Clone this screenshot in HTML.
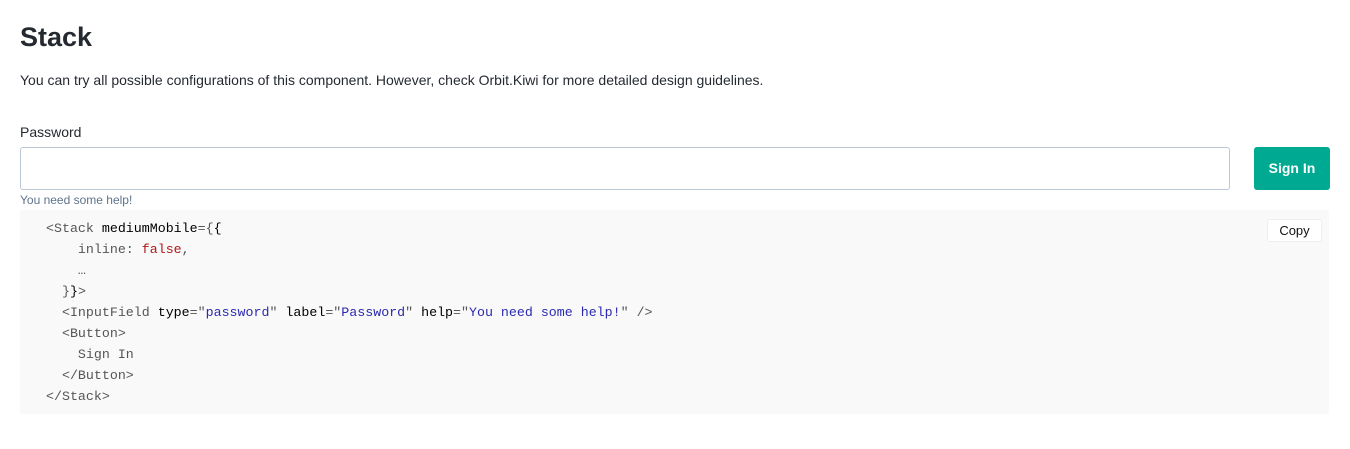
<!DOCTYPE html>
<html><head><style>
body{margin:0;background:#fff;font-family:"Liberation Sans",sans-serif;color:#252a31;width:1350px;height:449px;overflow:hidden;position:relative}
.a{position:absolute}
h1{position:absolute;left:20px;top:22px;margin:0;font-size:27px;font-weight:bold;color:#252a31}
.code{position:absolute;left:20px;top:210px;width:1309px;height:204px;background:#f9f9f9}
pre{margin:0;position:absolute;left:26px;top:8px;font-family:"Liberation Mono",monospace;font-size:13.3px;line-height:21px;color:#555}
.k{color:#000}.s{color:#2a2ab0}.r{color:#b01818}
</style></head><body>
<h1>Stack</h1>
<div class="a" style="left:20px;top:72px;font-size:14px;">You can try all possible configurations of this component. However, check Orbit.Kiwi for more detailed design guidelines.</div>
<div class="a" style="left:20px;top:124px;font-size:14px;">Password</div>
<div class="a" style="left:20px;top:147px;width:1208px;height:41px;border:1px solid #bac7d5;border-radius:3px;"></div>
<div class="a" style="left:1254px;top:147px;width:76px;height:43px;background:#00a991;border-radius:3px;color:#fff;font-weight:bold;font-size:14px;line-height:43px;text-align:center">Sign In</div>
<div class="a" style="left:20px;top:193px;font-size:12px;color:#5f738c">You need some help!</div>
<div class="code">
<pre>&lt;Stack <span class="k">mediumMobile</span>={<span class="k">{</span>
    inline: <span class="r">false</span>,
    …
  }<span class="k">}</span>&gt;
  &lt;InputField <span class="k">type</span>="<span class="s">password</span>" <span class="k">label</span>="<span class="s">Password</span>" <span class="k">help</span>="<span class="s">You need some help!</span>" /&gt;
  &lt;Button&gt;
    Sign In
  &lt;/Button&gt;
&lt;/Stack&gt;</pre>
<div class="a" style="left:1247px;top:9px;width:53px;height:21px;background:#fff;border:1px solid #eee;border-radius:3px;font-size:13px;line-height:21px;text-align:center;color:#111">Copy</div>
</div>
</body></html>
